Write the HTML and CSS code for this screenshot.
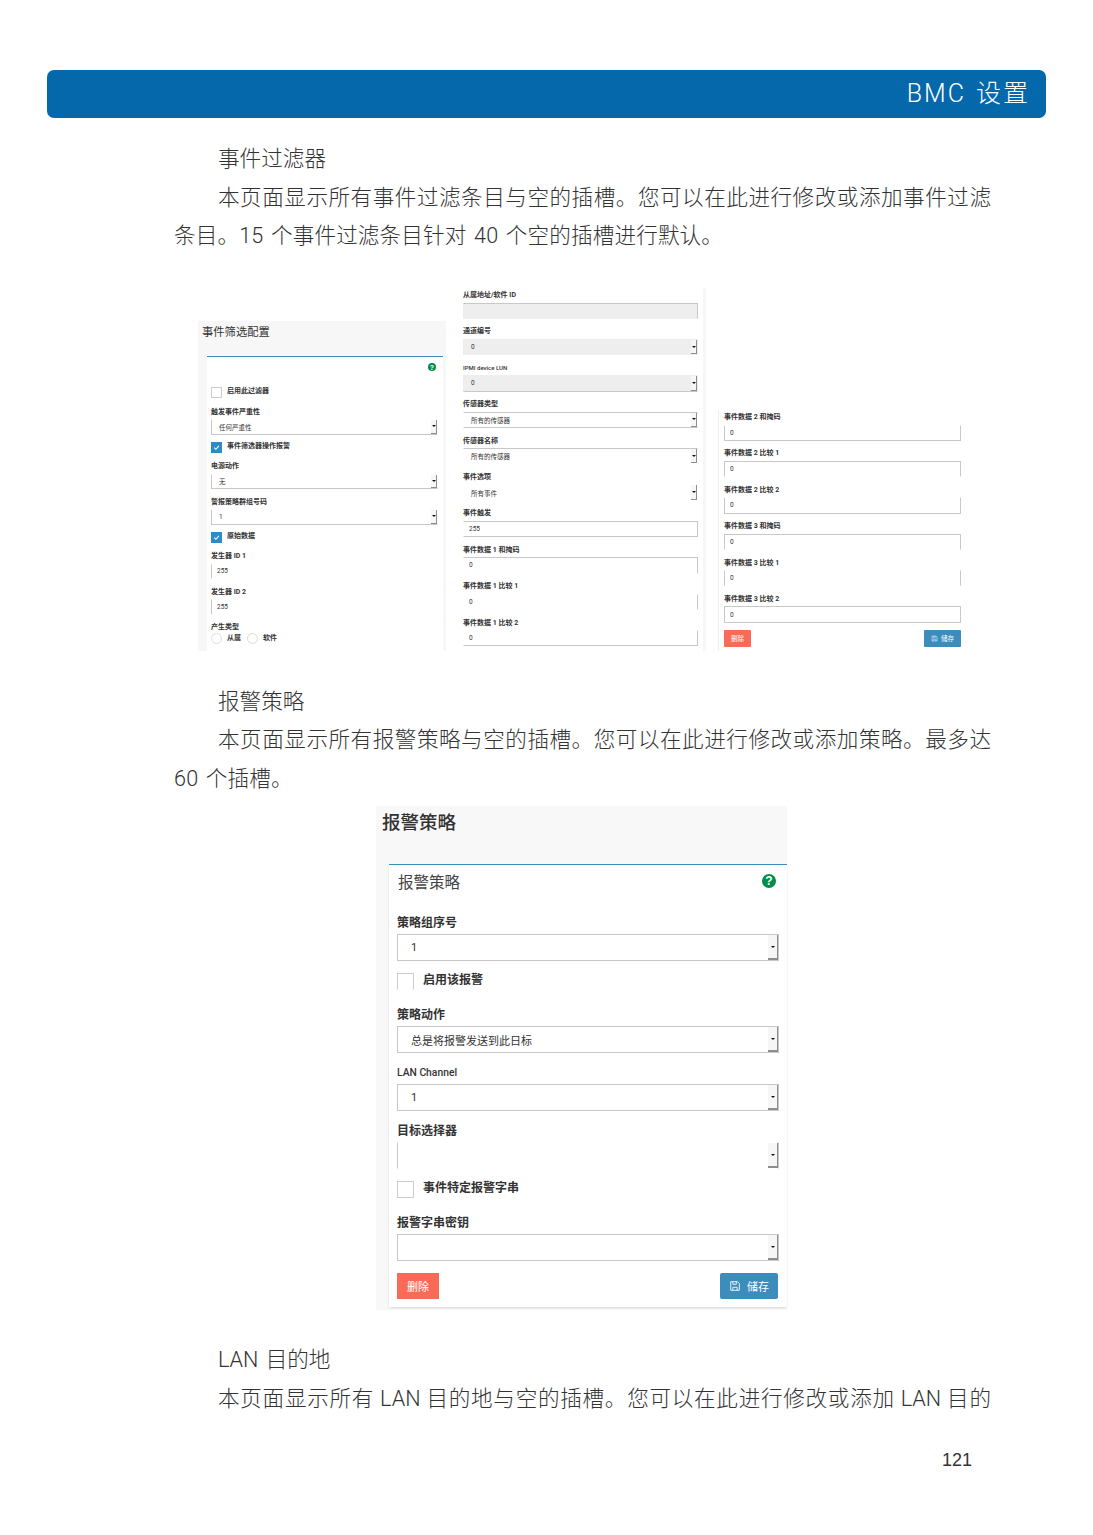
FILE: index.html
```html
<!DOCTYPE html>
<html lang="zh-CN">
<head>
<meta charset="utf-8">
<title>BMC 设置</title>
<link rel="stylesheet" href="styles.css">
</head>
<body>
<header class="banner">BMC 设置</header>
<main class="article">
  <p class="title">事件过滤器</p>
  <p class="para"><span class="full">本页面显示所有事件过滤条目与空的插槽。您可以在此进行修改或添加事件过滤</span><span class="rest">条目。15 个事件过滤条目针对 40 个空的插槽进行默认。</span></p>

  <figure class="shots">
    <section class="shot-one">
      <h2 class="shot-title">事件筛选配置</h2>
      <div class="shot-card form-sm">
        <div class="help-row"><span class="help">?</span></div>
        <div class="chk-row"><span class="chk"></span><span class="chk-label">启用此过滤器</span></div>
        <div class="fld"><label>触发事件严重性</label><div class="ctl no-t no-r"><span>任何严重性</span><i class="arrow"></i></div></div>
        <div class="chk-row"><span class="chk on"><svg viewBox="0 0 12 12"><path d="M3 6.2 5.2 8.4 9.2 3.8"/></svg></span><span class="chk-label">事件筛选器操作报警</span></div>
        <div class="fld"><label>电源动作</label><div class="ctl no-t no-r"><span>无</span><i class="arrow"></i></div></div>
        <div class="fld"><label>警报策略群组号码</label><div class="ctl no-t no-r"><span>1</span><i class="arrow"></i></div></div>
        <div class="chk-row"><span class="chk on"><svg viewBox="0 0 12 12"><path d="M3 6.2 5.2 8.4 9.2 3.8"/></svg></span><span class="chk-label">原始数据</span></div>
        <div class="fld"><label>发生器 ID 1</label><div class="ctl input no-t no-r no-b"><span>255</span></div></div>
        <div class="fld"><label>发生器 ID 2</label><div class="ctl input no-t no-r no-b"><span>255</span></div></div>
        <div class="fld last"><label>产生类型</label>
          <div class="radios"><span class="radio"></span><span class="chk-label">从属</span><span class="radio"></span><span class="chk-label">软件</span></div>
        </div>
      </div>
    </section>

    <section class="shot-two form-sm">
      <div class="fld"><label>从属地址/软件 ID</label><div class="ctl off no-b no-l"></div></div>
      <div class="fld"><label>通道编号</label><div class="ctl off bare"><span>0</span><i class="arrow"></i></div></div>
      <div class="fld"><label class="lat">IPMI device LUN</label><div class="ctl off no-t no-l no-r"><span>0</span><i class="arrow"></i></div></div>
      <div class="fld"><label>传感器类型</label><div class="ctl no-l no-r"><span>所有的传感器</span><i class="arrow"></i></div></div>
      <div class="fld"><label>传感器名称</label><div class="ctl no-l no-r no-b"><span>所有的传感器</span><i class="arrow"></i></div></div>
      <div class="fld"><label>事件选项</label><div class="ctl bare"><span>所有事件</span><i class="arrow"></i></div></div>
      <div class="fld"><label>事件触发</label><div class="ctl input no-l"><span>255</span></div></div>
      <div class="fld"><label>事件数据 1 和掩码</label><div class="ctl input no-l no-b"><span>0</span></div></div>
      <div class="fld"><label>事件数据 1 比较 1</label><div class="ctl input no-l no-t no-b"><span>0</span></div></div>
      <div class="fld"><label>事件数据 1 比较 2</label><div class="ctl input no-l no-t"><span>0</span></div></div>
    </section>

    <div class="strip"></div>

    <section class="shot-three form-sm">
      <div class="fld"><label>事件数据 2 和掩码</label><div class="ctl input no-t"><span>0</span></div></div>
      <div class="fld"><label>事件数据 2 比较 1</label><div class="ctl input no-b"><span>0</span></div></div>
      <div class="fld"><label>事件数据 2 比较 2</label><div class="ctl input no-t"><span>0</span></div></div>
      <div class="fld"><label>事件数据 3 和掩码</label><div class="ctl input no-b"><span>0</span></div></div>
      <div class="fld"><label>事件数据 3 比较 1</label><div class="ctl input no-t no-b"><span>0</span></div></div>
      <div class="fld"><label>事件数据 3 比较 2</label><div class="ctl input"><span>0</span></div></div>
      <div class="actions">
        <button class="btn del" type="button">删除</button>
        <button class="btn save" type="button"><svg viewBox="0 0 14 14"><path d="M2 2h8l2 2v8H2z"/><path d="M4.5 2v3h4V2M4.5 12V8.5h5V12"/></svg>储存</button>
      </div>
    </section>
  </figure>

  <p class="title after-shots">报警策略</p>
  <p class="para"><span class="full">本页面显示所有报警策略与空的插槽。您可以在此进行修改或添加策略。最多达</span><span class="rest">60 个插槽。</span></p>

  <figure class="policy">
    <h2 class="policy-title">报警策略</h2>
    <div class="policy-card form-lg">
      <div class="policy-head"><h3>报警策略</h3><span class="help">?</span></div>
      <div class="fld"><label>策略组序号</label><div class="ctl"><span>1</span><i class="arrow"></i></div></div>
      <div class="chk-row"><span class="chk no-b"></span><span class="chk-label">启用该报警</span></div>
      <div class="fld"><label>策略动作</label><div class="ctl"><span>总是将报警发送到此日标</span><i class="arrow"></i></div></div>
      <div class="fld"><label class="lat">LAN Channel</label><div class="ctl"><span>1</span><i class="arrow"></i></div></div>
      <div class="fld"><label>目标选择器</label><div class="ctl no-t no-b"><span></span><i class="arrow"></i></div></div>
      <div class="chk-row"><span class="chk"></span><span class="chk-label">事件特定报警字串</span></div>
      <div class="fld"><label>报警字串密钥</label><div class="ctl"><span></span><i class="arrow"></i></div></div>
      <div class="actions">
        <button class="btn del" type="button">删除</button>
        <button class="btn save" type="button"><svg viewBox="0 0 14 14"><path d="M2 2h8l2 2v8H2z"/><path d="M4.5 2v3h4V2M4.5 12V8.5h5V12"/></svg>储存</button>
      </div>
    </div>
  </figure>

  <p class="title after-policy">LAN 目的地</p>
  <p class="para"><span class="full">本页面显示所有 LAN 目的地与空的插槽。您可以在此进行修改或添加 LAN 目的</span></p>
</main>
<footer class="page-no">121</footer>
</body>
</html>
```

FILE: styles.css
```css
* { box-sizing: border-box; }
html, body { margin: 0; padding: 0; background: #fff; }
body {
  min-height: 1535px;
  font-family: Roboto, "Noto Sans CJK SC", sans-serif;
  color: #333;
}

.banner {
  margin: 70px 47px 0;
  height: 48px;
  padding-right: 16px;
  background: #0468ab;
  border-radius: 7px;
  color: #fff;
  font-size: 25px;
  font-weight: 300;
  letter-spacing: 2px;
  word-spacing: 2px;
  line-height: 48px;
  text-align: right;
}

.article { margin: 22px 102px 0 174px; }
.title, .para {
  margin: 0;
  font-size: 21.6px;
  font-weight: 300;
  line-height: 38.7px;
  color: #333;
}
.title { padding-left: 44px; word-spacing: 2px; }
.after-shots { margin-top: 31.6px; }
.after-policy { margin-top: 31.1px; }
.para .full { display: block; padding-left: 44px; text-align: justify; text-align-last: justify; }
.para .rest { display: block; letter-spacing: .15px; word-spacing: 2px; }

/* shared form primitives */
.form-sm {
  --lh: 10px; --lmb: 3px; --ch: 16.4px; --cmb: 7px; --lshift: .5px;
  --lf: 7px; --vf: 6.5px; --pl: 7px; --arr: 6px; --box: 11px; --gap: 5px; --chk-mb: 8px;
}
.form-lg {
  --lh: 14px; --lmb: 5px; --ch: 27px; --cmb: 12px; --lshift: 1px;
  --lf: 12px; --vf: 11px; --pl: 13px; --arr: 10px; --box: 17px; --gap: 9px; --chk-mb: 17px;
}
.fld { margin-bottom: var(--cmb); }
.fld label {
  display: block;
  height: var(--lh);
  margin-bottom: var(--lmb);
  padding-top: var(--lshift);
  font-size: var(--lf);
  font-weight: 700;
  line-height: var(--lh);
  color: #333;
  white-space: nowrap;
}
.fld label.lat { font-size: calc(var(--lf) * .86); font-weight: 500; }
.ctl {
  display: flex;
  justify-content: space-between;
  align-items: stretch;
  height: var(--ch);
  border: 1px solid #c8c8c8;
  background: #fff;
  font-size: var(--vf);
  color: #333;
}
.ctl > span { padding-left: var(--pl); align-self: center; white-space: nowrap; }
.ctl.input > span { padding-left: 5px; }
.ctl.off { background: #eee; }
.ctl.bare { border-color: transparent; }
.no-t { border-top-color: transparent !important; }
.no-r { border-right-color: transparent !important; }
.no-b { border-bottom-color: transparent !important; }
.no-l { border-left-color: transparent !important; }
.arrow {
  display: flex;
  align-items: center;
  justify-content: center;
  flex: none;
  width: var(--arr);
  background: #f6f6f6;
  border-right: 1px solid #8d8d8d;
  border-bottom: 1px solid #8d8d8d;
}
.arrow::before {
  content: "";
  border-left: 2px solid transparent;
  border-right: 2px solid transparent;
  border-top: 2px solid #111;
}
.form-lg .arrow { border-bottom-width: 2px; }

.chk-row {
  display: flex;
  align-items: flex-start;
  gap: var(--gap);
  margin-bottom: var(--chk-mb);
}
.chk {
  display: block;
  flex: none;
  width: var(--box);
  height: var(--box);
  border: 1px solid #ccc;
  background: #fff;
}
.chk.on { background: #2e8bc9; border-color: #2e8bc9; }
.chk svg { display: block; width: 100%; height: 100%; fill: none; stroke: #fff; stroke-width: 1.4; }
.chk-label {
  font-size: var(--lf);
  font-weight: 700;
  line-height: calc(var(--box) - 3px);
  color: #333;
  white-space: nowrap;
}
.form-lg .chk-label { line-height: 15px; }

.help {
  display: flex;
  align-items: center;
  justify-content: center;
  border-radius: 50%;
  background: #008d4c;
  color: #fff;
  font-family: "Liberation Sans", sans-serif;
  font-weight: 700;
}

.actions { display: flex; justify-content: space-between; }
.btn {
  display: flex;
  align-items: center;
  justify-content: center;
  border: 0;
  padding: 0;
  color: #fff;
  font-family: Roboto, "Noto Sans CJK SC", sans-serif;
}
.btn.del { background: #f96a57; }
.btn.save { background: #3c8dbc; }
.btn svg { fill: none; stroke: #fff; }

/* three-column screenshot */
.shots {
  display: flex;
  align-items: flex-end;
  height: 363px;
  margin: 31.9px 0 0 24px;
}
.shot-one {
  flex: none;
  width: 248px;
  height: 330px;
  background: #f7f7f7;
}
.shot-title {
  height: 35px;
  margin: 0;
  padding: 1.5px 0 0 4px;
  font-size: 11.3px;
  font-weight: 400;
  line-height: 20px;
  color: #333;
}
.shot-card {
  height: 295px;
  margin: 0 3px 0 9px;
  padding: 0 5px 0 4px;
  background: #fff;
  border-top: 1px solid #3c8dbc;
}
.shot-card .help-row { display: flex; justify-content: flex-end; padding: 6px 2px 0 0; margin-bottom: 16px; }
.shot-card .help { width: 8px; height: 8px; font-size: 7px; }
.shot-card .ctl { height: 15.5px; }
.shot-card .last label { margin-bottom: 1px; }
.shot-card .radios .chk-label { line-height: 10px; }
.radios { display: flex; align-items: flex-start; gap: 5px; }
.radio {
  flex: none;
  width: 11px;
  height: 11px;
  border: 1px solid #ddd;
  border-radius: 50%;
}
.radios .chk-label + .radio { margin-left: 1px; }

.shot-two {
  flex: none;
  width: 235px;
  height: 363px;
  margin-left: 17px;
  padding-top: 1.5px;
}
.strip {
  flex: none;
  width: 3px;
  height: 363px;
  margin-left: 5px;
  background: #f7f7f7;
}
.shot-three {
  flex: none;
  width: 243px;
  height: 241px;
  margin-left: 12px;
  padding: 1.5px 0 0 5px;
  border-left: 1px solid #eee;
}
.form-sm .btn { height: 17px; font-size: 6.5px; border-radius: 1px; }
.form-sm .btn.del { width: 27px; }
.form-sm .btn.save { width: 37px; gap: 3px; }
.form-sm .btn svg { width: 7px; height: 7px; }

/* alert policy screenshot */
.policy {
  width: 411px;
  height: 504px;
  margin: 7.3px 0 0 202px;
  background: #f8f8f8;
}
.policy-title {
  height: 58px;
  margin: 0;
  padding: 5px 0 0 6px;
  font-size: 18.5px;
  font-weight: 500;
  line-height: 24px;
  color: #333;
}
.policy-card {
  height: 443px;
  margin-left: 13px;
  padding: 0 8px 0 8px;
  background: #fff;
  border-top: 1px solid #3c8dbc;
  box-shadow: 0 1px 2px rgba(0, 0, 0, .12);
}
.policy-head {
  display: flex;
  align-items: center;
  justify-content: space-between;
  height: 31px;
  margin-bottom: 19px;
  padding-right: 3px;
}
.policy-head h3 { margin: 0; padding-left: 1px; font-size: 15.5px; font-weight: 400; color: #444; }
.policy-head .help { width: 14px; height: 14px; font-size: 12px; }
.form-lg .actions { margin-right: 1px; }
.form-lg .btn { height: 26px; font-size: 11px; border-radius: 2px; }
.form-lg .btn.del { width: 42px; border-radius: 0; }
.form-lg .btn.save { width: 58px; gap: 6px; }
.form-lg .btn svg { width: 12px; height: 12px; }

.page-no {
  margin-top: 30.5px;
  padding-right: 121px;
  font-family: "Liberation Sans", sans-serif;
  font-size: 18px;
  line-height: 22px;
  text-align: right;
  color: #333;
}
```
